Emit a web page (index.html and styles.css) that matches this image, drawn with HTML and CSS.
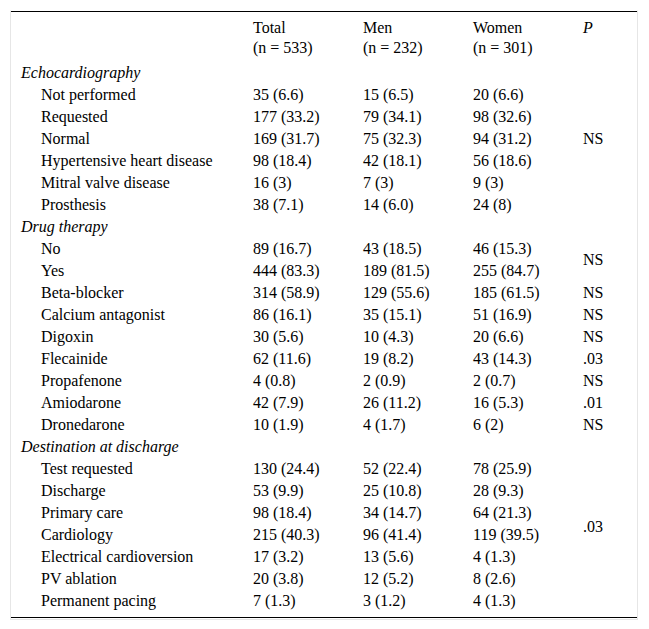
FILE: index.html
```html
<!DOCTYPE html>
<html>
<head>
<meta charset="utf-8">
<link rel="stylesheet" href="styles.css">
</head>
<body>
<div class="frame">
<table class="data">
<colgroup><col class="c1"><col class="cn"><col class="cn"><col class="cn"><col class="cp"></colgroup>
<thead>
<tr class="head"><th></th><th>Total<br>(n = 533)</th><th>Men<br>(n = 232)</th><th>Women<br>(n = 301)</th><th><i>P</i></th></tr>
</thead>
<tbody>
<tr><td class="sec">Echocardiography</td><td></td><td></td><td></td><td rowspan="7" class="mid">NS</td></tr>
<tr><td class="ind">Not performed</td><td>35 (6.6)</td><td>15 (6.5)</td><td>20 (6.6)</td></tr>
<tr><td class="ind">Requested</td><td>177 (33.2)</td><td>79 (34.1)</td><td>98 (32.6)</td></tr>
<tr><td class="ind">Normal</td><td>169 (31.7)</td><td>75 (32.3)</td><td>94 (31.2)</td></tr>
<tr><td class="ind">Hypertensive heart disease</td><td>98 (18.4)</td><td>42 (18.1)</td><td>56 (18.6)</td></tr>
<tr><td class="ind">Mitral valve disease</td><td>16 (3)</td><td>7 (3)</td><td>9 (3)</td></tr>
<tr><td class="ind">Prosthesis</td><td>38 (7.1)</td><td>14 (6.0)</td><td>24 (8)</td></tr>
<tr><td class="sec">Drug therapy</td><td></td><td></td><td></td><td></td></tr>
<tr><td class="ind">No</td><td>89 (16.7)</td><td>43 (18.5)</td><td>46 (15.3)</td><td rowspan="2" class="mid">NS</td></tr>
<tr><td class="ind">Yes</td><td>444 (83.3)</td><td>189 (81.5)</td><td>255 (84.7)</td></tr>
<tr><td class="ind">Beta-blocker</td><td>314 (58.9)</td><td>129 (55.6)</td><td>185 (61.5)</td><td>NS</td></tr>
<tr><td class="ind">Calcium antagonist</td><td>86 (16.1)</td><td>35 (15.1)</td><td>51 (16.9)</td><td>NS</td></tr>
<tr><td class="ind">Digoxin</td><td>30 (5.6)</td><td>10 (4.3)</td><td>20 (6.6)</td><td>NS</td></tr>
<tr><td class="ind">Flecainide</td><td>62 (11.6)</td><td>19 (8.2)</td><td>43 (14.3)</td><td>.03</td></tr>
<tr><td class="ind">Propafenone</td><td>4 (0.8)</td><td>2 (0.9)</td><td>2 (0.7)</td><td>NS</td></tr>
<tr><td class="ind">Amiodarone</td><td>42 (7.9)</td><td>26 (11.2)</td><td>16 (5.3)</td><td>.01</td></tr>
<tr><td class="ind">Dronedarone</td><td>10 (1.9)</td><td>4 (1.7)</td><td>6 (2)</td><td>NS</td></tr>
<tr><td class="sec">Destination at discharge</td><td></td><td></td><td></td><td rowspan="8" class="mid">.03</td></tr>
<tr><td class="ind">Test requested</td><td>130 (24.4)</td><td>52 (22.4)</td><td>78 (25.9)</td></tr>
<tr><td class="ind">Discharge</td><td>53 (9.9)</td><td>25 (10.8)</td><td>28 (9.3)</td></tr>
<tr><td class="ind">Primary care</td><td>98 (18.4)</td><td>34 (14.7)</td><td>64 (21.3)</td></tr>
<tr><td class="ind">Cardiology</td><td>215 (40.3)</td><td>96 (41.4)</td><td>119 (39.5)</td></tr>
<tr><td class="ind">Electrical cardioversion</td><td>17 (3.2)</td><td>13 (5.6)</td><td>4 (1.3)</td></tr>
<tr><td class="ind">PV ablation</td><td>20 (3.8)</td><td>12 (5.2)</td><td>8 (2.6)</td></tr>
<tr class="last"><td class="ind">Permanent pacing</td><td>7 (1.3)</td><td>3 (1.2)</td><td>4 (1.3)</td></tr>
</tbody>
</table>
</div>
</body>
</html>
```
FILE: styles.css
```css
html, body {
  margin: 0;
  padding: 0;
  background: #fff;
}
body {
  padding: 10px 0 0 10px;
  font-family: "Liberation Serif", "Times New Roman", serif;
  font-size: 16px;
  color: #000;
}
.frame {
  width: 626px;
  border: 1px solid #e6e6e6;
  border-top-color: #fff;
  padding-bottom: 1px;
}
.data {
  width: 626px;
  table-layout: fixed;
  border-collapse: collapse;
  border-top: 1px solid #000;
  border-bottom: 1px solid #000;
  font-family: "Liberation Serif", "Times New Roman", serif;
  font-size: 16px;
}
.c1 { width: 232px; }
.cn { width: 110px; }
.cp { width: 64px; }
.data td, .data th {
  padding: 2px 0 2px 10px;
  line-height: 18px;
  text-align: left;
  vertical-align: top;
  font-weight: normal;
  white-space: nowrap;
  font-family: "Liberation Serif", "Times New Roman", serif;
}
.head th {
  padding-top: 6px;
  padding-bottom: 4px;
  line-height: 20px;
}
.data td.sec { font-style: italic; }
.data td.ind { padding-left: 30px; }
.data td.mid { vertical-align: middle; }
.last td { padding-bottom: 7px; }
```
